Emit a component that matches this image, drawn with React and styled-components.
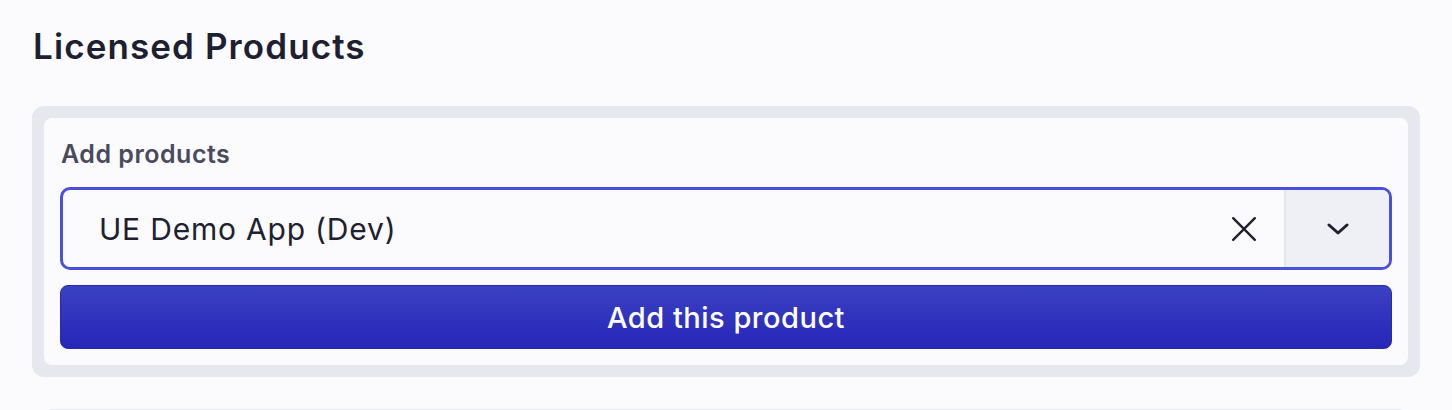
import React from "react";
import styled, { createGlobalStyle } from "styled-components";

const GlobalStyle = createGlobalStyle`
  body {
    margin: 0;
    background: #fbfbfe;
    font-family: Inter, "Noto Sans", sans-serif;
  }
`;

const Page = styled.div`
  padding: 24px 32px 0 32px;
`;

const Title = styled.h2`
  margin: 0 0 38px 1px;
  font-size: 35px;
  line-height: 44px;
  font-weight: 600;
  color: #1e1f31;
  letter-spacing: 1.1px;
`;

const Well = styled.div`
  background: #e7e8ef;
  border-radius: 12px;
  padding: 12px;
`;

const Card = styled.div`
  background: #fbfbfe;
  border-radius: 8px;
  padding: 20px 16px 16px 16px;
  display: flex;
  flex-direction: column;
`;

const Label = styled.label`
  font-size: 25px;
  line-height: 32px;
  font-weight: 600;
  color: #4a4a5d;
  letter-spacing: 0.5px;
  margin: 0 0 17px 1px;
`;

const Select = styled.div`
  display: flex;
  align-items: stretch;
  height: 83px;
  box-sizing: border-box;
  border: 3px solid #4a4fe0;
  border-radius: 10px;
  overflow: hidden;
  background: #fbfbfe;
`;

const Value = styled.div`
  flex: 1;
  display: flex;
  align-items: center;
  padding-left: 36px;
  font-size: 30px;
  letter-spacing: 0.8px;
  color: #1f2030;
`;

const IconButton = styled.button`
  border: none;
  background: ${(p) => (p.$shaded ? "#eef0f5" : "transparent")};
  border-left: ${(p) => (p.$shaded ? "2px solid #e4e6ec" : "none")};
  width: ${(p) => p.$width}px;
  display: flex;
  align-items: center;
  justify-content: center;
  padding: 0;
  color: #1f2030;
`;

const AddButton = styled.button`
  margin-top: 15px;
  height: 64px;
  border: 1px solid #2828b0;
  border-radius: 8px;
  background: linear-gradient(180deg, #3b41c2 0%, #2626b9 100%);
  color: #ffffff;
  font-family: Inter, "Noto Sans", sans-serif;
  font-size: 29px;
  letter-spacing: 0.5px;
  font-weight: 500;
`;

const NextBlock = styled.div`
  margin: 32px 9px 0 8px;
  height: 12px;
  border-top: 2px solid #e7e8ec;
  border-radius: 12px 12px 0 0;
`;

export default function App() {
  return (
    <>
      <GlobalStyle />
      <Page>
        <Title>Licensed Products</Title>
        <Well>
          <Card>
            <Label>Add products</Label>
            <Select>
              <Value>UE Demo App (Dev)</Value>
              <IconButton $width={80} aria-label="Clear">
                <svg width="26" height="26" viewBox="0 0 24 24" fill="none" stroke="currentColor" strokeWidth="2.2" strokeLinecap="round">
                  <path d="M2 2L22 22M22 2L2 22" />
                </svg>
              </IconButton>
              <IconButton $shaded $width={105} aria-label="Open">
                <svg width="22" height="12" viewBox="0 0 22 12" fill="none" stroke="currentColor" strokeWidth="3" strokeLinecap="round" strokeLinejoin="round">
                  <path d="M2 2L11 10L20 2" />
                </svg>
              </IconButton>
            </Select>
            <AddButton>Add this product</AddButton>
          </Card>
        </Well>
        <NextBlock />
      </Page>
    </>
  );
}
